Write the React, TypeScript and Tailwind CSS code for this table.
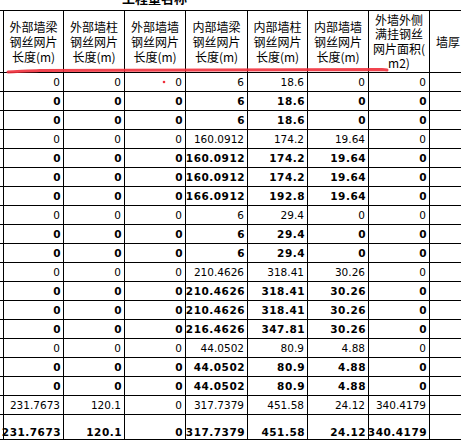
const W = [
  "w-[4px]",
  "w-[60px]",
  "w-[61px]",
  "w-[61px]",
  "w-[62px]",
  "w-[60px]",
  "w-[61px]",
  "w-[61px]",
  "w-[37px]",
];

const headers: string[][] = [
  [],
  ["外部墙梁", "钢丝网片", "长度(m)"],
  ["外部墙柱", "钢丝网片", "长度(m)"],
  ["外部墙墙", "钢丝网片", "长度(m)"],
  ["内部墙梁", "钢丝网片", "长度(m)"],
  ["内部墙柱", "钢丝网片", "长度(m)"],
  ["内部墙墙", "钢丝网片", "长度(m)"],
  ["外墙外侧", "满挂钢丝", "网片面积(", "m2)"],
  ["墙厚"],
];

type Row = { bold: boolean; v: string[]; tall?: boolean };

const r = (bold: boolean, v: string[], tall = false): Row => ({ bold, v, tall });

const rows: Row[] = [
  r(false, ["0", "0", "0", "6", "18.6", "0", "0"]),
  r(true, ["0", "0", "0", "6", "18.6", "0", "0"]),
  r(true, ["0", "0", "0", "6", "18.6", "0", "0"]),
  r(false, ["0", "0", "0", "160.0912", "174.2", "19.64", "0"]),
  r(true, ["0", "0", "0", "160.0912", "174.2", "19.64", "0"]),
  r(true, ["0", "0", "0", "160.0912", "174.2", "19.64", "0"]),
  r(true, ["0", "0", "0", "166.0912", "192.8", "19.64", "0"]),
  r(false, ["0", "0", "0", "6", "29.4", "0", "0"]),
  r(true, ["0", "0", "0", "6", "29.4", "0", "0"]),
  r(true, ["0", "0", "0", "6", "29.4", "0", "0"]),
  r(false, ["0", "0", "0", "210.4626", "318.41", "30.26", "0"]),
  r(true, ["0", "0", "0", "210.4626", "318.41", "30.26", "0"]),
  r(true, ["0", "0", "0", "210.4626", "318.41", "30.26", "0"]),
  r(true, ["0", "0", "0", "216.4626", "347.81", "30.26", "0"]),
  r(false, ["0", "0", "0", "44.0502", "80.9", "4.88", "0"]),
  r(true, ["0", "0", "0", "44.0502", "80.9", "4.88", "0"]),
  r(true, ["0", "0", "0", "44.0502", "80.9", "4.88", "0"]),
  r(false, ["231.7673", "120.1", "0", "317.7379", "451.58", "24.12", "340.4179"]),
  r(true, ["231.7673", "120.1", "0", "317.7379", "451.58", "24.12", "340.4179"], true),
];

export default function App() {
  return (
    <div className="relative w-[461px] h-[440px] overflow-hidden bg-white text-black">
      {/* title, mostly scrolled off */}
      <div className="h-[10px] overflow-hidden">
        <div className="mt-[-9px] pl-[122px] text-[13px] leading-[14px] font-bold font-['Noto_Sans_CJK_SC',sans-serif] whitespace-nowrap">
          工程量名称
        </div>
      </div>

      <div className="border-t border-black w-[467px]">
        {/* header */}
        <div className="flex h-[62px] border-b border-black">
          {headers.map((lines, i) => (
            <div
              key={i}
              className={`${W[i]} shrink-0 border-r border-black flex flex-col items-center justify-center text-[12px] font-['Noto_Sans_CJK_SC',sans-serif] whitespace-nowrap ${
                i === 7 ? "leading-[14.5px]" : "leading-[15px]"
              }`}
            >
              {lines.map((l) => (
                <span key={l}>{l}</span>
              ))}
            </div>
          ))}
        </div>

        {/* data rows */}
        {rows.map((row, ri) => (
          <div
            key={ri}
            className={`flex border-b border-black ${row.tall ? "h-[25px]" : "h-[19px]"}`}
          >
            <div className={`${W[0]} shrink-0 border-r border-black`} />
            {row.v.map((val, ci) => (
              <div
                key={ci}
                className={`${W[ci + 1]} shrink-0 border-r border-black flex justify-end whitespace-nowrap font-['DejaVu_Sans',sans-serif] text-[10.5px] leading-[12px] ${
                  row.tall ? "items-end pb-[1px]" : "items-center"
                } ${row.bold ? "font-bold tracking-[0.5px] pr-[2px]" : "pr-[3px]"}`}
              >
                {val}
              </div>
            ))}
            <div className={`${W[8]} shrink-0`} />
          </div>
        ))}
      </div>

      {/* red pen mark over the sheet */}
      <svg
        className="absolute left-0 top-0 pointer-events-none"
        width={461}
        height={440}
        viewBox="0 0 461 440"
      >
        <path
          d="M8 72 C 18 71.6, 28 70.8, 40 70.4 L 300 69.8 L 382 69.6 Q 385 69.7 387 70"
          fill="none"
          stroke="#ef2f3b"
          strokeWidth={3}
          strokeLinecap="round"
          opacity={0.9}
        />
        <circle cx={164} cy={82} r={1.3} fill="#ef2f3b" />
      </svg>
    </div>
  );
}
